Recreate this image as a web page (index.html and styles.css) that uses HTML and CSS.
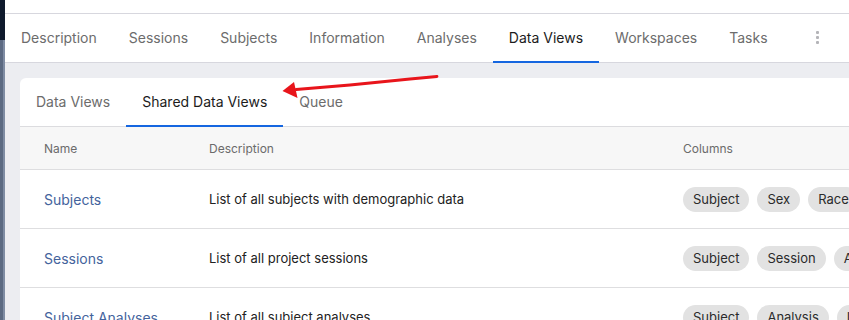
FILE: index.html
```html
<!DOCTYPE html>
<html lang="en">
<head>
<meta charset="utf-8">
<title>Data Views</title>
<link rel="stylesheet" href="styles.css">
</head>
<body>
<div class="app">
  <aside class="sidebar"><div class="sidebar-top"></div></aside>
  <div class="main">
    <div class="topbar"></div>
    <nav class="tabs">
      <a class="tab">Description</a>
      <a class="tab">Sessions</a>
      <a class="tab">Subjects</a>
      <a class="tab">Information</a>
      <a class="tab">Analyses</a>
      <a class="tab active">Data Views</a>
      <a class="tab">Workspaces</a>
      <a class="tab">Tasks</a>
      <span class="kebab"><i></i><i></i><i></i></span>
    </nav>
    <div class="content">
      <section class="card">
        <div class="subtabs">
          <a class="subtab">Data Views</a>
          <a class="subtab active">Shared Data Views</a>
          <a class="subtab">Queue</a>
        </div>
        <div class="table">
          <div class="row head">
            <div class="cell">Name</div>
            <div class="cell">Description</div>
            <div class="cell">Columns</div>
          </div>
          <div class="row">
            <div class="cell"><a class="link">Subjects</a></div>
            <div class="cell desc">List of all subjects with demographic data</div>
            <div class="cell chips"><span class="chip">Subject</span><span class="chip">Sex</span><span class="chip">Race</span><span class="chip">Ethnicity</span></div>
          </div>
          <div class="row">
            <div class="cell"><a class="link">Sessions</a></div>
            <div class="cell desc">List of all project sessions</div>
            <div class="cell chips"><span class="chip">Subject</span><span class="chip">Session</span><span class="chip">Age</span></div>
          </div>
          <div class="row">
            <div class="cell"><a class="link">Subject Analyses</a></div>
            <div class="cell desc">List of all subject analyses</div>
            <div class="cell chips"><span class="chip">Subject</span><span class="chip">Analysis</span><span class="chip">Label</span></div>
          </div>
        </div>
      </section>
    </div>
  </div>
  <svg class="annot" width="849" height="320" viewBox="0 0 849 320" aria-hidden="true">
    <path d="M437 76.5 L410 79 L380 82 L350 85 L320 87.5 L296 89.5" fill="none" stroke="#e8151b" stroke-width="2.8" stroke-linecap="round"/>
    <path d="M282.5 91 L294 82 L297.5 98 Z" fill="#e8151b"/>
  </svg>
</div>
</body>
</html>
```

FILE: styles.css
```css
* { box-sizing: border-box; }
html, body { margin: 0; padding: 0; }
body {
  font-family: Inter, "Noto Sans", sans-serif;
  width: 849px;
  height: 320px;
  overflow: hidden;
  background: #ecedf1;
}
.app {
  position: relative;
  display: flex;
  width: 849px;
  height: 320px;
  overflow: hidden;
}
.sidebar {
  flex: 0 0 5px;
  background: #5c6a82;
  box-shadow: inset -2px 0 0 #7f8ca3;
}
.sidebar-top {
  height: 40px;
  background: #0f1a2d;
}
.main {
  flex: 1 0 auto;
  display: flex;
  flex-direction: column;
  min-width: 0;
}
.main > * { flex-shrink: 0; }
.topbar {
  height: 14px;
  background: #fff;
  border-bottom: 1px solid #d7d7de;
}
.tabs {
  display: flex;
  align-items: stretch;
  height: 49px;
  background: #fff;
  border-bottom: 1px solid #d7d7de;
}
.tab {
  display: flex;
  align-items: center;
  padding: 0 16px 1px;
  font-size: 14px;
  color: #6c6c6c;
  border-bottom: 2px solid transparent;
  margin-bottom: -1px;
}
.tab.active {
  color: #1c1c1c;
  border-bottom-color: #1566e0;
}
.kebab {
  display: flex;
  flex-direction: column;
  justify-content: center;
  gap: 2px;
  margin-left: 32px;
  padding-bottom: 2px;
}
.kebab i {
  display: block;
  width: 3px;
  height: 3px;
  background: #b4b4b8;
  border-radius: 1px;
}
.content {
  padding: 15px 0 0 15px;
}
.card {
  width: 1100px;
  background: #fff;
  border-radius: 6px 0 0 0;
}
.subtabs {
  display: flex;
  height: 49px;
  border-bottom: 1px solid #dcdcdf;
}
.subtab {
  display: flex;
  align-items: center;
  padding: 0 16px 0;
  font-size: 14px;
  color: #6c6c6c;
  border-bottom: 2px solid transparent;
  margin-bottom: -1px;
}
.subtab.active {
  color: #1c1c1c;
  border-bottom-color: #1566e0;
}
.row {
  display: grid;
  grid-template-columns: 165px 474px 1fr;
  height: 59px;
  border-bottom: 1px solid #dedee0;
  align-items: center;
}
.row.head {
  height: 43px;
  background: #f7f7f7;
}
.cell {
  padding-left: 24px;
  white-space: nowrap;
}
.head .cell {
  font-size: 12px;
  color: #6b6b6b;
}
.link {
  font-size: 14px;
  color: #44639c;
}
.desc {
  font-size: 13px;
  color: #222;
}
.chips {
  display: flex;
  gap: 8px;
}
.chip {
  display: inline-flex;
  align-items: center;
  height: 25px;
  padding: 0 10px;
  border-radius: 13px;
  background: #e2e2e2;
  font-size: 13px;
  color: #2a2a2a;
}
.annot {
  position: absolute;
  left: 0;
  top: 0;
  pointer-events: none;
}
```
